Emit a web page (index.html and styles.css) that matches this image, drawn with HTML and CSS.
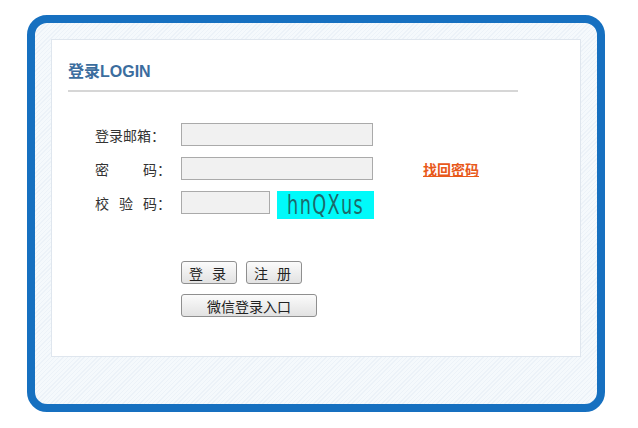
FILE: index.html
```html
<!DOCTYPE html>
<html lang="zh-CN">
<head>
    <meta charset="UTF-8">
    <title>登录</title>
    <link rel="stylesheet" href="styles.css">
</head>
<body>

    <div class="frame">
        <div class="panel">
            <h2 class="title">登录LOGIN</h2>

            <!-- 登录表单 -->
            <form class="login-form">
                <div class="row">
                    <label class="label">登录邮箱：</label>
                    <input type="text" class="input">
                </div>
                <div class="row">
                    <label class="label label-spread">密<span class="gap-wide">码：</span></label>
                    <input type="password" class="input">
                    <a href="#" class="forgot">找回密码</a>
                </div>
                <div class="row">
                    <label class="label label-spread">校<span class="gap">验</span><span class="gap">码：</span></label>
                    <input type="text" class="input input-short">
                    <span class="captcha"><span class="captcha-text">hnQXus</span></span>
                </div>

                <div class="buttons buttons-first">
                    <button type="button" class="btn">登 录</button>
                    <button type="button" class="btn">注 册</button>
                </div>
                <div class="buttons">
                    <button type="button" class="btn btn-wide">微信登录入口</button>
                </div>
            </form>
        </div>
    </div>

</body>
</html>
```

FILE: styles.css
```css
body {
    margin: 0;
    background: #fff;
    font-family: "Noto Sans CJK SC", "Liberation Sans", sans-serif;
    color: #333;
}

.frame {
    box-sizing: border-box;
    width: 578px;
    height: 397px;
    margin: 15px 0 0 27px;
    padding: 16px 16px 47px;
    border: 8px solid #1670c0;
    border-radius: 20px;
    background: repeating-linear-gradient(-45deg, #f5f9fc 0, #f5f9fc 2px, #ecf2f8 2px, #ecf2f8 3px);
}

.panel {
    box-sizing: border-box;
    height: 100%;
    background: #fff;
    border: 1px solid #dfe6ee;
    padding: 20px 0 0 16px;
}

.title {
    width: 450px;
    margin: 0;
    padding-bottom: 6px;
    border-bottom: 2px solid #d6d6d6;
    font-family: "Liberation Sans", "Noto Sans CJK SC", sans-serif;
    font-size: 16px;
    line-height: 24px;
    color: #3b6d9e;
    font-weight: bold;
}

.login-form {
    padding: 31px 0 0 27px;
}

.row {
    display: flex;
    align-items: center;
    height: 23px;
    margin-bottom: 11px;
}

.label {
    width: 86px;
    font-size: 14px;
    color: #333;
}

.label-spread {
    display: flex;
}

.gap-wide {
    margin-left: 34px;
}

.gap {
    margin-left: 10px;
}

.input {
    box-sizing: border-box;
    width: 192px;
    height: 23px;
    margin: 0;
    border: 1px solid #aaa;
    background: #f1f1f1;
}

.input-short {
    width: 89px;
}

.forgot {
    margin-left: 50px;
    font-size: 14px;
    font-weight: bold;
    color: #e8591a;
}

.captcha {
    display: flex;
    justify-content: center;
    width: 97px;
    height: 28px;
    margin: 5px 0 0 7px;
    background: #00fafa;
    overflow: hidden;
}

.captcha-text {
    flex: none;
    font-family: "DejaVu Sans", sans-serif;
    font-size: 26px;
    line-height: 28px;
    letter-spacing: 2px;
    color: #1d6a6a;
    transform: scaleX(0.68);
}

.buttons {
    display: flex;
    gap: 9px;
    margin-left: 86px;
    margin-top: 10px;
}

.buttons-first {
    margin-top: 47px;
}

.btn {
    box-sizing: border-box;
    width: 56px;
    height: 23px;
    padding: 0;
    border: 1px solid #8f8f8f;
    border-radius: 3px;
    background: linear-gradient(#fbfbfb, #e2e2e2);
    font-family: "Noto Sans CJK SC", sans-serif;
    font-size: 14px;
    letter-spacing: 3px;
    color: #222;
    cursor: pointer;
}

.btn-wide {
    width: 136px;
    letter-spacing: 0;
}
```
